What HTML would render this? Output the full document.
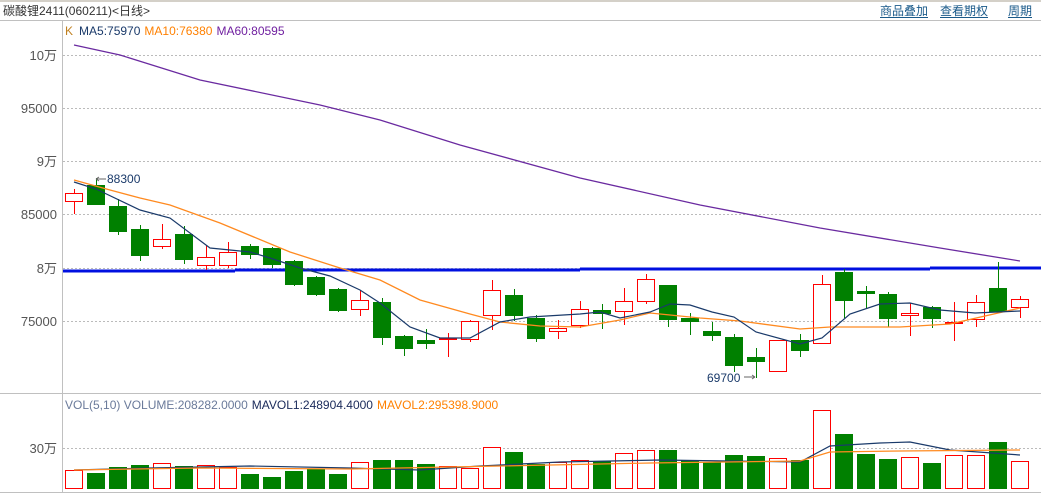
<!DOCTYPE html>
<html><head><meta charset="utf-8"><style>
body{margin:0;width:1041px;height:495px;overflow:hidden;background:#fff;font-family:"Liberation Sans","Noto Sans CJK SC",sans-serif}
svg{display:block}
</style></head><body>
<svg width="1041" height="495" xmlns="http://www.w3.org/2000/svg" font-family="Liberation Sans, Noto Sans CJK SC, sans-serif">
<rect x="0" y="0" width="1041" height="2" fill="#d4d0c8"/>
<line x1="0" y1="20.5" x2="1041" y2="20.5" stroke="#c0c0c0"/>
<text x="3" y="15" font-size="12" fill="#333">碳酸锂2411(060211)&lt;日线&gt;</text>
<g font-size="12" fill="#1a5a8a">
<text x="880" y="15">商品叠加</text><text x="940" y="15">查看期权</text><text x="1008" y="15">周期</text>
</g>
<line x1="880" y1="17.5" x2="928" y2="17.5" stroke="#1a5a8a"/>
<line x1="940" y1="17.5" x2="988" y2="17.5" stroke="#1a5a8a"/>
<line x1="1008" y1="17.5" x2="1032" y2="17.5" stroke="#1a5a8a"/>
<line x1="62.5" y1="20" x2="62.5" y2="492" stroke="#c0c0c0"/>
<line x1="0" y1="393.5" x2="1041" y2="393.5" stroke="#c0c0c0"/>
<line x1="0" y1="492.5" x2="1041" y2="492.5" stroke="#c0c0c0"/>
<g stroke="#bbb" stroke-dasharray="2,2">
<line x1="63" y1="55.5" x2="1041" y2="55.5"/><line x1="63" y1="108.5" x2="1041" y2="108.5"/>
<line x1="63" y1="161.5" x2="1041" y2="161.5"/><line x1="63" y1="214.5" x2="1041" y2="214.5"/>
<line x1="63" y1="268.5" x2="1041" y2="268.5"/><line x1="63" y1="321.5" x2="1041" y2="321.5"/>
<line x1="63" y1="448.5" x2="1041" y2="448.5"/>
</g>
<g font-size="13" fill="#555" text-anchor="end">
<text x="57" y="60">10万</text><text x="57" y="113">95000</text><text x="57" y="166">9万</text>
<text x="57" y="219">85000</text><text x="57" y="273">8万</text><text x="57" y="326">75000</text>
<text x="57" y="453">30万</text>
</g>
<text x="65" y="35" font-size="12"><tspan fill="#c08020">K</tspan><tspan fill="#1a3a6a" dx="6">MA5:75970</tspan><tspan fill="#ff8000" dx="4">MA10:76380</tspan><tspan fill="#7020a0" dx="4">MA60:80595</tspan></text>
<text x="65" y="409" font-size="12"><tspan fill="#6a7a9a">VOL(5,10) VOLUME:208282.0000</tspan><tspan fill="#1a2a5a" dx="4">MAVOL1:248904.4000</tspan><tspan fill="#ff8000" dx="4">MAVOL2:295398.9000</tspan></text>
<g fill="none" stroke-width="3" stroke="#0010e0">
<path d="M63 271H235"/><path d="M235 270H580"/><path d="M580 269H930"/><path d="M930 268H1041"/>
</g>
<polyline fill="none" stroke="#6a2aa0" stroke-width="1.3" points="74,45 120,55 200,80 320,105 380,120 460,145 580,178 700,205 820,228 940,248 1020,261"/>

<g stroke="#f00" fill="none">
<path d="M74.5 189V214M162.5 224V249M206.5 245V270M228.5 242V268M360.5 290V316M448.5 333V357M470.5 320V342M492.5 280V330M558.5 320V339M580.5 301V328M624.5 288V325M646.5 274V304M778.5 340V372M822.5 275V343M910.5 303V336M954.5 302V341M976.5 295V327M1020.5 296V318"/>
</g>
<g stroke="#008000" fill="none">
<path d="M96.5 178V205M118.5 199V235M140.5 225V261M184.5 226V264M250.5 244V259M272.5 247V268M294.5 260V286M316.5 276V296M338.5 288V312M382.5 298V345M404.5 335V356M426.5 329V349M514.5 289V321M536.5 315V342M602.5 304V329M668.5 285V327M690.5 313V335M712.5 322V341M734.5 334V372M756.5 348V378M800.5 334V357M844.5 269V318M866.5 286V309M888.5 292V327M932.5 306V328M998.5 262V312"/>
</g>
<g fill="#fff" stroke="#f00">
<rect x="65.5" y="193.5" width="17" height="8"/><rect x="153.5" y="239.5" width="17" height="7"/>
<rect x="197.5" y="257.5" width="17" height="8"/><rect x="219.5" y="252.5" width="17" height="13"/>
<rect x="351.5" y="300.5" width="17" height="9"/><rect x="439.5" y="338.5" width="17" height="1"/>
<rect x="461.5" y="321.5" width="17" height="18"/><rect x="483.5" y="290.5" width="17" height="25"/>
<rect x="549.5" y="328.5" width="17" height="3"/><rect x="571.5" y="309.5" width="17" height="16"/>
<rect x="615.5" y="301.5" width="17" height="10"/><rect x="637.5" y="279.5" width="17" height="22"/>
<rect x="769.5" y="340.5" width="17" height="31"/><rect x="813.5" y="284.5" width="17" height="59"/>
<rect x="901.5" y="313.5" width="17" height="2"/><rect x="945.5" y="322.5" width="17" height="1"/>
<rect x="967.5" y="302.5" width="17" height="17"/><rect x="1011.5" y="299.5" width="17" height="8"/>
</g>
<g fill="#008000">
<rect x="87" y="185" width="18" height="20"/><rect x="109" y="206" width="18" height="26"/>
<rect x="131" y="229" width="18" height="27"/><rect x="175" y="234" width="18" height="26"/>
<rect x="241" y="246" width="18" height="9"/><rect x="263" y="248" width="18" height="17"/>
<rect x="285" y="261" width="18" height="24"/><rect x="307" y="277" width="18" height="18"/>
<rect x="329" y="289" width="18" height="22"/><rect x="373" y="302" width="18" height="36"/>
<rect x="395" y="336" width="18" height="13"/><rect x="417" y="340" width="18" height="4"/>
<rect x="505" y="295" width="18" height="21"/><rect x="527" y="318" width="18" height="21"/>
<rect x="593" y="310" width="18" height="4"/><rect x="659" y="285" width="18" height="35"/>
<rect x="681" y="318" width="18" height="4"/><rect x="703" y="331" width="18" height="5"/>
<rect x="725" y="337" width="18" height="29"/><rect x="747" y="357" width="18" height="5"/>
<rect x="791" y="340" width="18" height="11"/><rect x="835" y="272" width="18" height="29"/>
<rect x="857" y="291" width="18" height="3"/><rect x="879" y="294" width="18" height="25"/>
<rect x="923" y="307" width="18" height="12"/><rect x="989" y="288" width="18" height="24"/>
</g>

<polyline fill="none" stroke="#ff8a20" stroke-width="1.3" points="74,180 110,190 140,198 170,205 220,223 290,252 340,268 380,280 420,300 470,314 500,322 540,326 580,327 620,320 650,313 700,318 740,321 800,329 830,327 900,327 950,324 1020,308"/>
<polyline fill="none" stroke="#1a3a6a" stroke-width="1.2" points="74,182 96,189 140,210 170,218 210,248 250,252 270,258 300,268 330,276 360,290 380,303 410,327 440,338 470,338 500,322 530,317 580,314 600,312 620,318 650,312 670,304 690,305 712,312 734,317 756,332 800,344 822,338 850,314 880,304 910,303 940,310 975,313 1020,311"/>

<g fill="#fff" stroke="#f00">
<rect x="65.5" y="470.5" width="17" height="18"/><rect x="153.5" y="463.5" width="17" height="25"/>
<rect x="197.5" y="465.5" width="17" height="23"/><rect x="219.5" y="467.5" width="17" height="21"/>
<rect x="351.5" y="462.5" width="17" height="26"/><rect x="439.5" y="466.5" width="17" height="22"/>
<rect x="461.5" y="468.5" width="17" height="20"/><rect x="483.5" y="447.5" width="17" height="41"/>
<rect x="549.5" y="462.5" width="17" height="26"/><rect x="571.5" y="460.5" width="17" height="28"/>
<rect x="615.5" y="453.5" width="17" height="35"/><rect x="637.5" y="450.5" width="17" height="38"/>
<rect x="769.5" y="458.5" width="17" height="30"/><rect x="813.5" y="410.5" width="17" height="78"/>
<rect x="901.5" y="457.5" width="17" height="31"/><rect x="945.5" y="455.5" width="17" height="33"/>
<rect x="967.5" y="455.5" width="17" height="33"/><rect x="1011.5" y="461.5" width="17" height="27"/>
</g>
<g fill="#008000">
<rect x="87" y="473" width="18" height="16"/><rect x="109" y="467" width="18" height="22"/>
<rect x="131" y="465" width="18" height="24"/><rect x="175" y="466" width="18" height="23"/>
<rect x="241" y="474" width="18" height="15"/><rect x="263" y="477" width="18" height="12"/>
<rect x="285" y="471" width="18" height="18"/><rect x="307" y="469" width="18" height="20"/>
<rect x="329" y="474" width="18" height="15"/><rect x="373" y="460" width="18" height="29"/>
<rect x="395" y="460" width="18" height="29"/><rect x="417" y="464" width="18" height="25"/>
<rect x="505" y="452" width="18" height="37"/><rect x="527" y="464" width="18" height="25"/>
<rect x="593" y="461" width="18" height="28"/><rect x="659" y="450" width="18" height="39"/>
<rect x="681" y="460" width="18" height="29"/><rect x="703" y="462" width="18" height="27"/>
<rect x="725" y="455" width="18" height="34"/><rect x="747" y="456" width="18" height="33"/>
<rect x="791" y="460" width="18" height="29"/><rect x="835" y="434" width="18" height="55"/>
<rect x="857" y="454" width="18" height="35"/><rect x="879" y="459" width="18" height="30"/>
<rect x="923" y="463" width="18" height="26"/><rect x="989" y="442" width="18" height="47"/>
</g>
<polyline fill="none" stroke="#1a3a6a" stroke-width="1.2" points="74,470 150,468 250,466 350,468 420,470 480,466 560,462 660,460 800,462 830,446 880,443 910,442 950,450 1020,455"/>
<polyline fill="none" stroke="#ff8a20" stroke-width="1.2" points="74,470 200,468 350,469 500,466 650,463 800,461 830,452 900,451 1020,450"/>

<text x="107" y="183" font-size="12" fill="#1a3a6a">88300</text>
<path d="M96 179H106M96 179l3-2M96 179l3 2" stroke="#666" fill="none"/>
<text x="707" y="382" font-size="12" fill="#1a3a6a">69700</text>
<path d="M744 377H755M755 377l-3-2M755 377l-3 2" stroke="#666" fill="none"/>
</svg>
</body></html>
